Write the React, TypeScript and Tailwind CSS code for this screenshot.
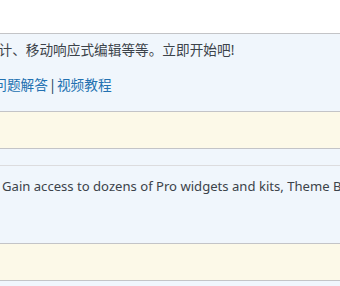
import React from 'react';

export default function App() {
  return (
    <div className="w-[340px] h-[286px] overflow-hidden bg-[#f0f6fc] text-[13.67px] leading-[20.5px] text-[#3c434a] font-['Noto_Sans','Noto_Sans_CJK_SC',sans-serif]">
      {/* top white row */}
      <div className="h-[33px] bg-white" />

      {/* active plugin description */}
      <div className="h-[78px] border-t border-[#c3c4c7] pt-[5.75px] whitespace-nowrap">
        <p className="ml-[-1.5px]">计、移动响应式编辑等等。立即开始吧!</p>
        <p className="mt-[14.5px] ml-[-6.7px] text-[#2271b1]">
          问题解答<span className="inline-block w-[9px] text-center text-[#2c4a66]">|</span>视频教程
        </p>
      </div>

      {/* update notice row */}
      <div className="h-[38px] border-y border-[#c3c4c7] bg-[#fcf9e8]" />

      <div className="h-[16px]" />

      {/* next plugin */}
      <div className="h-[78px] border-t border-[#dcdcde] pt-[9.75px] pl-[2px] whitespace-nowrap">
        <p className="text-[13.1px]">Gain access to dozens of Pro widgets and kits, Theme Builder, Pop Ups</p>
      </div>

      <div className="h-[38px] border-y border-[#c3c4c7] bg-[#fcf9e8]" />
    </div>
  );
}
